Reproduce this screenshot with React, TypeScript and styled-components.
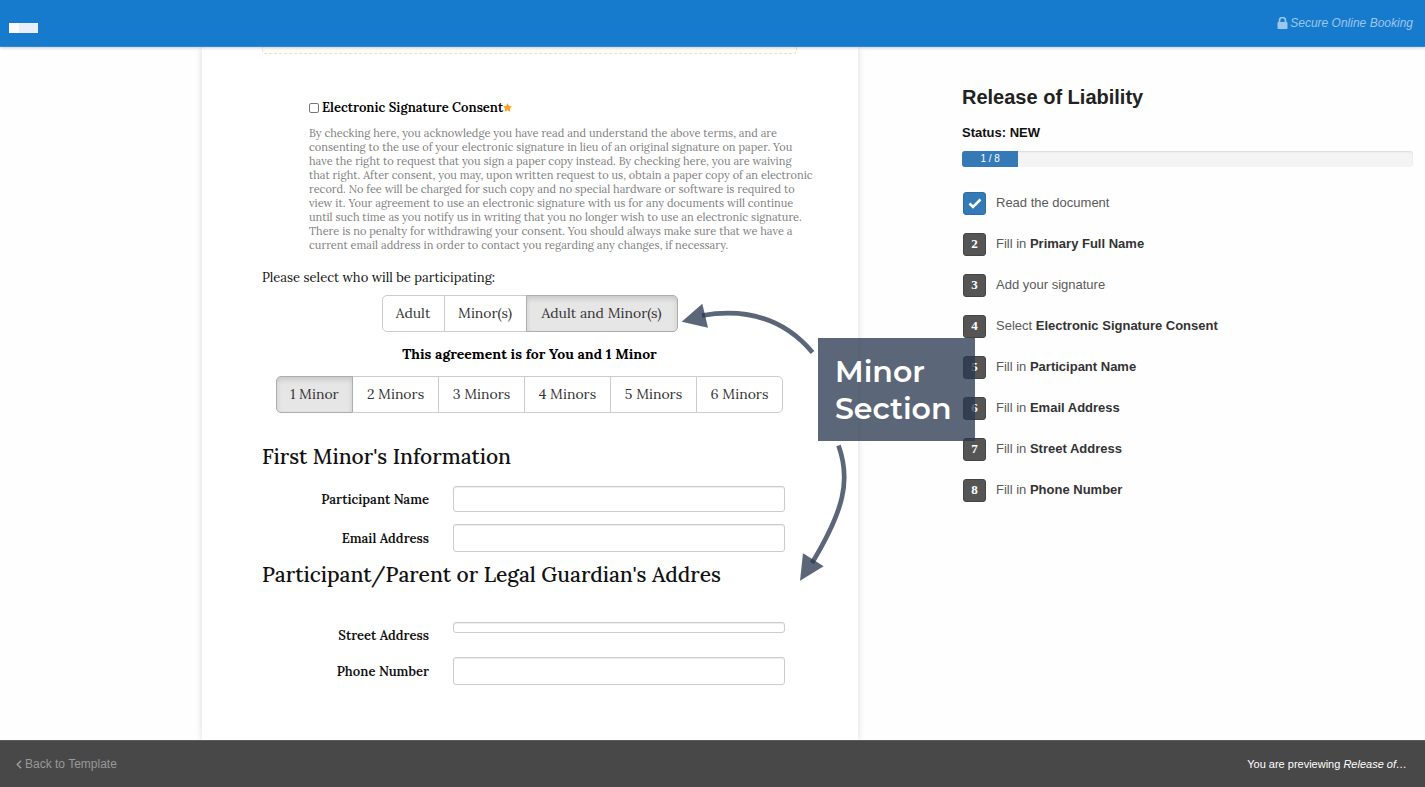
import { useState } from 'react';
import styled, { createGlobalStyle, css } from 'styled-components';

const serif = `Lora, "Liberation Serif", serif`;
const sans = `"Liberation Sans", Arial, sans-serif`;

const GlobalStyle = createGlobalStyle`
  *, *::before, *::after { box-sizing: border-box; }
  body { margin: 0; background: #fefefe; color: #222; font: 13px/20px ${sans}; overflow-x: hidden; }
  button, input { font-family: inherit; }
  h1, h2, p, ol { margin: 0; padding: 0; }
`;

const Page = styled.div`
  display: flex;
  flex-direction: column;
  min-height: 100vh;
`;

const TopBar = styled.header`
  display: flex;
  align-items: center;
  justify-content: space-between;
  height: 47px;
  padding: 0 12px 0 9px;
  background: #177bcd;
  border-bottom: 1px solid #2f86dc;
  box-shadow: 0 1px 3px rgba(0, 0, 0, 0.2);
  position: relative;
  z-index: 2;
`;

const Logo = styled.a`
  width: 29px;
  height: 10px;
  margin-top: 10px;
  background: linear-gradient(to right, #fbfcff 10px, #e8eefa 10px);
`;

const Secure = styled.span`
  display: flex;
  align-items: center;
  gap: 2px;
  color: #9cc6ec;
  font-size: 12px;
  font-style: italic;
`;

const Content = styled.main`
  flex: 1;
  display: grid;
  grid-template-columns: minmax(0, 202fr) minmax(0, 656fr) minmax(0, 104fr) minmax(0, 451fr);
  padding-right: 12px;
`;

const Paper = styled.section`
  grid-column: 2;
  position: relative;
  padding: 0 61px 40px 60px;
  background: #fff;
  box-shadow: 0 0 7px rgba(0, 0, 0, 0.14);
  font-family: ${serif};
  color: #111;
`;

const DashedEdge = styled.div`
  height: 7px;
  border: 1px dashed #eedfc4;
  border-top: 0;
  border-radius: 0 0 4px 4px;
  background: #fffdf8;
`;

const Consent = styled.div`
  margin: 43px 0 0 47px;
`;

const ConsentLabel = styled.label`
  display: flex;
  align-items: center;
  font-size: 13px;
  line-height: 21px;
  font-weight: 600;
  color: #000;
`;

const Tick = styled.input`
  appearance: none;
  width: 10px;
  height: 10px;
  margin: 0 3px 0 0;
  border: 1px solid #767676;
  border-radius: 2px;
  background: #fff;
  &:checked { background: #337ab7; }
`;

const Terms = styled.p`
  margin-top: 8px;
  font-size: 11px;
  line-height: 14px;
  color: #808080;
  white-space: nowrap;
`;

const Question = styled.p`
  margin: 16px 0 7px;
  font-size: 13px;
  line-height: 20px;
`;

const ButtonGroup = styled.div`
  display: flex;
  justify-content: center;
`;

const Choice = styled.button<{ $active: boolean }>`
  height: 37px;
  padding: 0 10px 2px;
  margin-left: -1px;
  border: 1px solid #ccc;
  background: #fff;
  color: #333;
  font-size: 14px;
  white-space: nowrap;
  &:first-child { border-radius: 5px 0 0 5px; margin-left: 0; }
  &:last-child { border-radius: 0 5px 5px 0; }
  ${(p) =>
    p.$active &&
    css`
      position: relative;
      background: #e6e6e6;
      border-color: #adadad;
      box-shadow: inset 0 3px 5px rgba(0, 0, 0, 0.125);
    `}
`;

const WhoChoice = styled(Choice)`
  &:nth-child(1) { width: 63px; }
  &:nth-child(2) { width: 83px; }
  &:nth-child(3) { width: 152px; }
`;

const CountChoice = styled(Choice)`
  width: 87px;
  &:first-child { width: 77px; }
`;

const Summary = styled.p`
  margin: 12px 0;
  text-align: center;
  font-size: 14px;
  line-height: 20px;
  font-weight: 700;
  color: #000;
`;

const SectionTitle = styled.h2`
  font-size: 21px;
  line-height: 28px;
  font-weight: 500;
  white-space: nowrap;
`;

const MinorTitle = styled(SectionTitle)`
  margin-top: 30px;
`;

const AddressTitle = styled(SectionTitle)`
  margin-top: 9px;
`;

const Fields = styled.div`
  display: flex;
  flex-direction: column;
  gap: 12px;
  margin-top: 15px;
  padding-right: 12px;
`;

const AddressFields = styled(Fields)`
  margin-top: 33px;
  gap: 11px;
`;

const Field = styled.div`
  display: grid;
  grid-template-columns: 167px 1fr;
  column-gap: 24px;
  align-items: center;
`;

const FieldLabel = styled.label`
  padding-top: 2px;
  text-align: right;
  font-size: 13px;
  line-height: 20px;
  font-weight: 600;
`;

const TextBox = styled.input<{ $height: number }>`
  width: 100%;
  height: ${(p) => p.$height}px;
  padding: 0 8px;
  border: 1px solid #ccc;
  border-radius: 3px;
  background: #fff;
  box-shadow: inset 0 1px 1px rgba(0, 0, 0, 0.075);
`;

const TopAlignedField = styled(Field)`
  align-items: start;
  ${FieldLabel} { padding-top: 4px; }
`;

const Sidebar = styled.aside`
  grid-column: 4;
  padding-top: 37px;
`;

const DocTitle = styled.h1`
  font-size: 20px;
  line-height: 26px;
  font-weight: 700;
  color: #222;
`;

const Status = styled.p`
  margin: 13px 0 8px;
  font-weight: 700;
  color: #111;
`;

const Progress = styled.div`
  height: 16px;
  border-radius: 3px;
  overflow: hidden;
  background: #f4f4f4;
  box-shadow: inset 0 1px 2px rgba(0, 0, 0, 0.1);
`;

const ProgressFill = styled.div`
  height: 100%;
  background: #337ab7;
  color: #fff;
  font-size: 10px;
  line-height: 16px;
  text-align: center;
`;

const Steps = styled.ol`
  list-style: none;
  margin-top: 24px;
  display: flex;
  flex-direction: column;
  gap: 17px;
`;

const Step = styled.li`
  display: flex;
  align-items: center;
  gap: 10px;
  height: 24px;
  padding-left: 1px;
  color: #5a5a5a;
  strong { color: #333; }
`;

const Badge = styled.span<{ $done: boolean }>`
  display: flex;
  align-items: center;
  justify-content: center;
  width: 23px;
  height: 23px;
  border: 1px solid ${(p) => (p.$done ? '#2e6da4' : '#444')};
  border-radius: 3px;
  background: ${(p) => (p.$done ? '#337ab7' : '#555')};
  color: #fff;
  font: 700 13px/20px "Liberation Serif", serif;
`;

const Arrows = styled.svg`
  position: absolute;
  left: 478px;
  top: 253px;
  z-index: 1;
  pointer-events: none;
`;

const Callout = styled.div`
  position: absolute;
  left: 616px;
  top: 291px;
  z-index: 1;
  width: 157px;
  height: 103px;
  padding: 15px 17px;
  background: rgba(40, 56, 78, 0.765);
  color: #fff;
  font: 600 30px/37px Montserrat, Inter, sans-serif;
`;

const BottomBar = styled.footer`
  display: flex;
  align-items: center;
  justify-content: space-between;
  height: 47px;
  padding: 0 18px 0 16px;
  border-top: 1px solid #5c5c5c;
  background: #484848;
  color: #fff;
  font-size: 11px;
  position: relative;
  z-index: 2;
`;

const BackLink = styled.a`
  display: flex;
  align-items: center;
  gap: 3px;
  color: #999;
  font-size: 12px;
  text-decoration: none;
`;

const who = ['Adult', 'Minor(s)', 'Adult and Minor(s)'];
const counts = ['1 Minor', '2 Minors', '3 Minors', '4 Minors', '5 Minors', '6 Minors'];
const steps = [
  ['Read the document', ''],
  ['Fill in ', 'Primary Full Name'],
  ['Add your signature', ''],
  ['Select ', 'Electronic Signature Consent'],
  ['Fill in ', 'Participant Name'],
  ['Fill in ', 'Email Address'],
  ['Fill in ', 'Street Address'],
  ['Fill in ', 'Phone Number'],
];

export default function App() {
  const [party, setParty] = useState(2);
  const [count, setCount] = useState(0);

  return (
    <Page>
      <GlobalStyle />
      <TopBar>
        <Logo href="#" aria-label="Home" />
        <Secure>
          <svg width="11" height="12" viewBox="0 0 11 12" aria-hidden="true">
            <path d="M2.5 5.5V3.5a3 3 0 0 1 6 0v2" fill="none" stroke="currentColor" strokeWidth="1.7" />
            <rect x="0.5" y="5" width="10" height="7" rx="1" fill="currentColor" />
          </svg>
          Secure Online Booking
        </Secure>
      </TopBar>

      <Content>
        <Paper>
          <DashedEdge />
          <Consent>
            <ConsentLabel>
              <Tick type="checkbox" />
              Electronic Signature Consent
              <svg width="9" height="9" viewBox="0 0 24 24" aria-hidden="true">
                <path fill="#ff9f1a" d="M12 0l3.7 7.8 8.3 1.1-6 6 1.5 8.6L12 19.4l-7.5 4.1L6 14.9l-6-6 8.3-1.1z" />
              </svg>
            </ConsentLabel>
            <Terms>
              By checking here, you acknowledge you have read and understand the above terms, and are<br />
              consenting to the use of your electronic signature in lieu of an original signature on paper. You<br />
              have the right to request that you sign a paper copy instead. By checking here, you are waiving<br />
              that right. After consent, you may, upon written request to us, obtain a paper copy of an electronic<br />
              record. No fee will be charged for such copy and no special hardware or software is required to<br />
              view it. Your agreement to use an electronic signature with us for any documents will continue<br />
              until such time as you notify us in writing that you no longer wish to use an electronic signature.<br />
              There is no penalty for withdrawing your consent. You should always make sure that we have a<br />
              current email address in order to contact you regarding any changes, if necessary.
            </Terms>
          </Consent>

          <Question>Please select who will be participating:</Question>
          <ButtonGroup>
            {who.map((label, i) => (
              <WhoChoice key={label} type="button" $active={party === i} onClick={() => setParty(i)}>
                {label}
              </WhoChoice>
            ))}
          </ButtonGroup>
          <Summary>This agreement is for You and 1 Minor</Summary>
          <ButtonGroup>
            {counts.map((label, i) => (
              <CountChoice key={label} type="button" $active={count === i} onClick={() => setCount(i)}>
                {label}
              </CountChoice>
            ))}
          </ButtonGroup>

          <MinorTitle>First Minor's Information</MinorTitle>
          <Fields>
            <Field>
              <FieldLabel htmlFor="participant">Participant Name</FieldLabel>
              <TextBox id="participant" $height={26} />
            </Field>
            <Field>
              <FieldLabel htmlFor="email">Email Address</FieldLabel>
              <TextBox id="email" type="email" $height={28} />
            </Field>
          </Fields>
          <AddressTitle>Participant/Parent or Legal Guardian's Addres</AddressTitle>
          <AddressFields>
            <TopAlignedField>
              <FieldLabel htmlFor="street">Street Address</FieldLabel>
              <TextBox id="street" $height={11} />
            </TopAlignedField>
            <Field>
              <FieldLabel htmlFor="phone">Phone Number</FieldLabel>
              <TextBox id="phone" type="tel" $height={28} />
            </Field>
          </AddressFields>

          <Arrows width="172" height="285" viewBox="0 0 172 285" fill="none" aria-hidden="true">
            <g stroke="#28384e" strokeOpacity="0.765" strokeWidth="4.7">
              <path d="M132.5 52.5C107 22 72 7 22 15.5" />
              <path d="M158.5 145.5C171 180 164 210 132 263" />
            </g>
            <g fill="#28384e" fillOpacity="0.765">
              <path d="M1.7 21.7L22.3 3.7L28 27.7z" />
              <path d="M123 253.3L143.7 266.3L120 280.7z" />
            </g>
          </Arrows>
          <Callout>Minor<br />Section</Callout>
        </Paper>

        <Sidebar>
          <DocTitle>Release of Liability</DocTitle>
          <Status>Status: NEW</Status>
          <Progress>
            <ProgressFill style={{ width: `${(1 / 8) * 100}%` }}>1 / 8</ProgressFill>
          </Progress>
          <Steps>
            {steps.map(([text, bold], i) => (
              <Step key={i}>
                <Badge $done={i === 0}>
                  {i === 0 ? (
                    <svg width="14" height="11" viewBox="0 0 14 11" aria-label="Done">
                      <path d="M1.5 5.5L5 9L12.5 1.5" fill="none" stroke="#fff" strokeWidth="2.6" />
                    </svg>
                  ) : (
                    i + 1
                  )}
                </Badge>
                <span>
                  {text}
                  {bold && <strong>{bold}</strong>}
                </span>
              </Step>
            ))}
          </Steps>
        </Sidebar>
      </Content>

      <BottomBar>
        <BackLink href="#">
          <svg width="6" height="9" viewBox="0 0 6 9" aria-hidden="true">
            <path d="M5 0.8L1.3 4.5L5 8.2" fill="none" stroke="currentColor" strokeWidth="1.6" />
          </svg>
          Back to Template
        </BackLink>
        <span>
          You are previewing <em>Release of…</em>
        </span>
      </BottomBar>
    </Page>
  );
}
